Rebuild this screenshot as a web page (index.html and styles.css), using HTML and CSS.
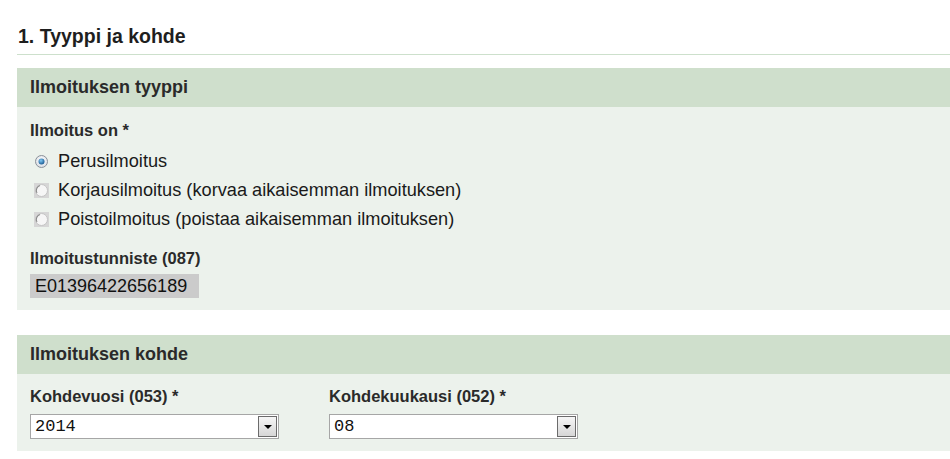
FILE: index.html
```html
<!DOCTYPE html>
<html lang="fi">
<head>
<meta charset="utf-8">
<link rel="stylesheet" href="styles.css">
</head>
<body>
<div class="page">
  <h1 class="title">1. Tyyppi ja kohde</h1>

  <section class="panel">
    <h2 class="panel-head">Ilmoituksen tyyppi</h2>
    <div class="panel-body first">
      <div class="label">Ilmoitus on *</div>
      <div class="radios">
        <div class="radio-row">
          <span class="radio-box">
            <svg width="13" height="13" viewBox="0 0 13 13">
              <defs>
                <radialGradient id="rg1" cx="50%" cy="40%" r="60%">
                  <stop offset="0" stop-color="#ffffff"/>
                  <stop offset="1" stop-color="#d8dde4"/>
                </radialGradient>
                <radialGradient id="dot" cx="40%" cy="35%" r="65%">
                  <stop offset="0" stop-color="#7fc8f4"/>
                  <stop offset="1" stop-color="#1c5d94"/>
                </radialGradient>
              </defs>
              <circle cx="6.5" cy="6.5" r="6" fill="url(#rg1)" stroke="#8a9098"/>
              <circle cx="6.5" cy="6.5" r="3" fill="url(#dot)"/>
            </svg>
          </span>
          <span>Perusilmoitus</span>
        </div>
        <div class="radio-row">
          <span class="radio-box">
            <svg width="15" height="15" viewBox="0 0 15 15">
              <rect x="0" y="0" width="15" height="15" fill="#d6d6d6"/>
              <circle cx="7.5" cy="7.5" r="6" fill="#f6f6f6" stroke="#c4c4c4"/>
              <path d="M3 10 A5.2 5.2 0 0 1 6 2.5" fill="none" stroke="#8a8a8a" stroke-width="1.1"/>
            </svg>
          </span>
          <span>Korjausilmoitus (korvaa aikaisemman ilmoituksen)</span>
        </div>
        <div class="radio-row">
          <span class="radio-box">
            <svg width="15" height="15" viewBox="0 0 15 15">
              <rect x="0" y="0" width="15" height="15" fill="#d6d6d6"/>
              <circle cx="7.5" cy="7.5" r="6" fill="#f6f6f6" stroke="#c4c4c4"/>
              <path d="M3 10 A5.2 5.2 0 0 1 6 2.5" fill="none" stroke="#8a8a8a" stroke-width="1.1"/>
            </svg>
          </span>
          <span>Poistoilmoitus (poistaa aikaisemman ilmoituksen)</span>
        </div>
      </div>
      <div class="label id-label">Ilmoitustunniste (087)</div>
      <div class="readonly">E01396422656189</div>
    </div>
  </section>

  <section class="panel second">
    <h2 class="panel-head">Ilmoituksen kohde</h2>
    <div class="panel-body fields">
      <div class="field">
        <div class="label">Kohdevuosi (053) *</div>
        <div class="select">
          <span class="select-value">2014</span>
          <span class="select-btn"><span class="tri"></span></span>
        </div>
      </div>
      <div class="field">
        <div class="label">Kohdekuukausi (052) *</div>
        <div class="select">
          <span class="select-value">08</span>
          <span class="select-btn"><span class="tri"></span></span>
        </div>
      </div>
    </div>
  </section>
</div>
</body>
</html>
```

FILE: styles.css
```css
html, body {
  margin: 0;
  padding: 0;
  background: #ffffff;
  overflow: hidden;
}
body {
  font-family: Arial, "Liberation Sans", sans-serif;
  color: #222;
}
.page {
  padding: 25px 0 0 17px;
  width: 960px;
}
.title {
  margin: 0;
  padding: 0 0 6px 1px;
  font-size: 19.5px;
  line-height: 23px;
  font-weight: bold;
  color: #1e1e1e;
  border-bottom: 1px solid #cde0cc;
}
.panel {
  margin-top: 13px;
  background: #ecf2ec;
}
.panel.second {
  margin-top: 25px;
}
.panel-head {
  margin: 0;
  background: #cfdfcc;
  height: 39px;
  line-height: 39px;
  padding-left: 13px;
  font-size: 18px;
  font-weight: bold;
  color: #2a2a2a;
}
.panel-body {
  padding: 12px 13px 12px 13px;
}
.label {
  font-size: 16.5px;
  font-weight: bold;
  line-height: 22px;
  color: #2a2a2a;
}
.radios {
  padding-top: 6px;
}
.radio-row {
  display: flex;
  align-items: center;
  height: 29px;
  font-size: 18.2px;
  color: #1a1a1a;
}
.radio-box {
  flex: none;
  width: 15px;
  height: 15px;
  margin-left: 4px;
  margin-right: 9px;
  display: flex;
  align-items: center;
  justify-content: center;
}
.radio-box svg {
  display: block;
}
.id-label {
  margin-top: 13px;
}
.readonly {
  margin-top: 5px;
  width: 164px;
  height: 24px;
  line-height: 24px;
  padding-left: 5px;
  background: #cbcbcb;
  font-size: 18px;
  color: #111;
}
.fields {
  display: flex;
  gap: 50px;
  padding-top: 11px;
  padding-bottom: 12px;
}
.select {
  margin-top: 7px;
  width: 247px;
  height: 23px;
  border: 1px solid #a6a6a6;
  background: #fff;
  display: flex;
  align-items: center;
  justify-content: space-between;
}
.select-value {
  font-family: "Courier New", "Liberation Mono", monospace;
  font-size: 17px;
  padding-left: 4px;
  color: #111;
}
.select-btn {
  width: 17px;
  height: 19px;
  margin-right: 1px;
  border: 1px solid #6b6b6b;
  background: linear-gradient(#f6f6f6, #d6d6d6);
  display: flex;
  align-items: center;
  justify-content: center;
}
.tri {
  width: 0;
  height: 0;
  border-left: 4px solid transparent;
  border-right: 4px solid transparent;
  border-top: 4px solid #000;
  margin-top: 1px;
}
```
